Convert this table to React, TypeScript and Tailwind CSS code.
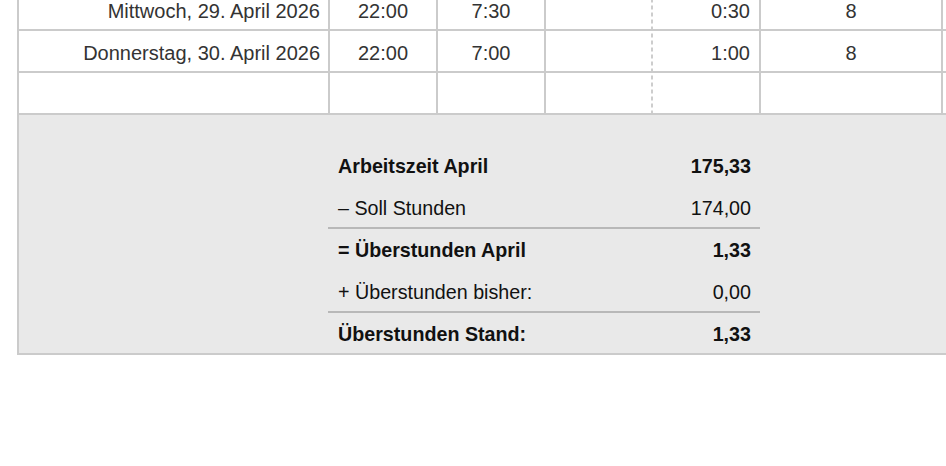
const rows = [
  { day: 'Mittwoch, 29. April 2026', start: '22:00', end: '7:30', pause: '', diff: '0:30', soll: '8' },
  { day: 'Donnerstag, 30. April 2026', start: '22:00', end: '7:00', pause: '', diff: '1:00', soll: '8' },
  { day: '', start: '', end: '', pause: '', diff: '', soll: '' },
];

const summary = [
  { label: 'Arbeitszeit April', value: '175,33', bold: true, line: false },
  { label: '– Soll Stunden', value: '174,00', bold: false, line: true },
  { label: '= Überstunden April', value: '1,33', bold: true, line: false },
  { label: '+ Überstunden bisher:', value: '0,00', bold: false, line: true },
  { label: 'Überstunden Stand:', value: '1,33', bold: true, line: false },
];

export default function App() {
  return (
    <div
      className="w-[946px] h-[466px] overflow-hidden bg-white text-[19.7px] text-[#333]"
      style={{ fontFamily: '"Liberation Sans", Arial, Helvetica, sans-serif' }}
    >
      <div className="ml-[17px] mt-[-11px] w-[1100px] border-l-2 border-[#cbcbcb]">
        {rows.map((r, i) => (
          <div
            key={i}
            className="grid grid-cols-[311px_108px_108px_107px_108px_182px_1fr] h-[42px] text-[20px] border-b-2 border-[#cbcbcb]"
          >
            <div className="flex items-center justify-end pt-[4px] pr-[8px] border-r-2 border-[#cbcbcb]">{r.day}</div>
            <div className="flex items-center justify-center pt-[4px] border-r-2 border-[#cbcbcb]">{r.start}</div>
            <div className="flex items-center justify-center pt-[4px] border-r-2 border-[#cbcbcb]">{r.end}</div>
            <div className="flex items-center justify-center pt-[4px] bg-[linear-gradient(#cdcdcd_0_4px,transparent_4px_7px)] bg-[length:2px_7px] bg-right bg-repeat-y">
              {r.pause}
            </div>
            <div className="flex items-center justify-end pt-[4px] pr-[9px] border-r-2 border-[#cbcbcb]">{r.diff}</div>
            <div className="flex items-center justify-center pt-[4px] border-r-2 border-[#cbcbcb]">{r.soll}</div>
            <div />
          </div>
        ))}

        <div className="bg-[#e9e9e9] border-b-2 border-[#cbcbcb] pt-[30px]">
          <div className="ml-[309px] w-[432px] text-[#111]">
            {summary.map((s, i) => (
              <div
                key={i}
                className={`flex items-center justify-between pt-[4px] pl-[10px] pr-[9px] ${
                  i === summary.length - 1 ? 'h-[40px]' : 'h-[42px] border-b-2'
                } ${s.line ? 'border-[#b8b8b8]' : 'border-transparent'} ${s.bold ? 'font-bold' : ''}`}
              >
                <span>{s.label}</span>
                <span>{s.value}</span>
              </div>
            ))}
          </div>
        </div>
      </div>
    </div>
  );
}
